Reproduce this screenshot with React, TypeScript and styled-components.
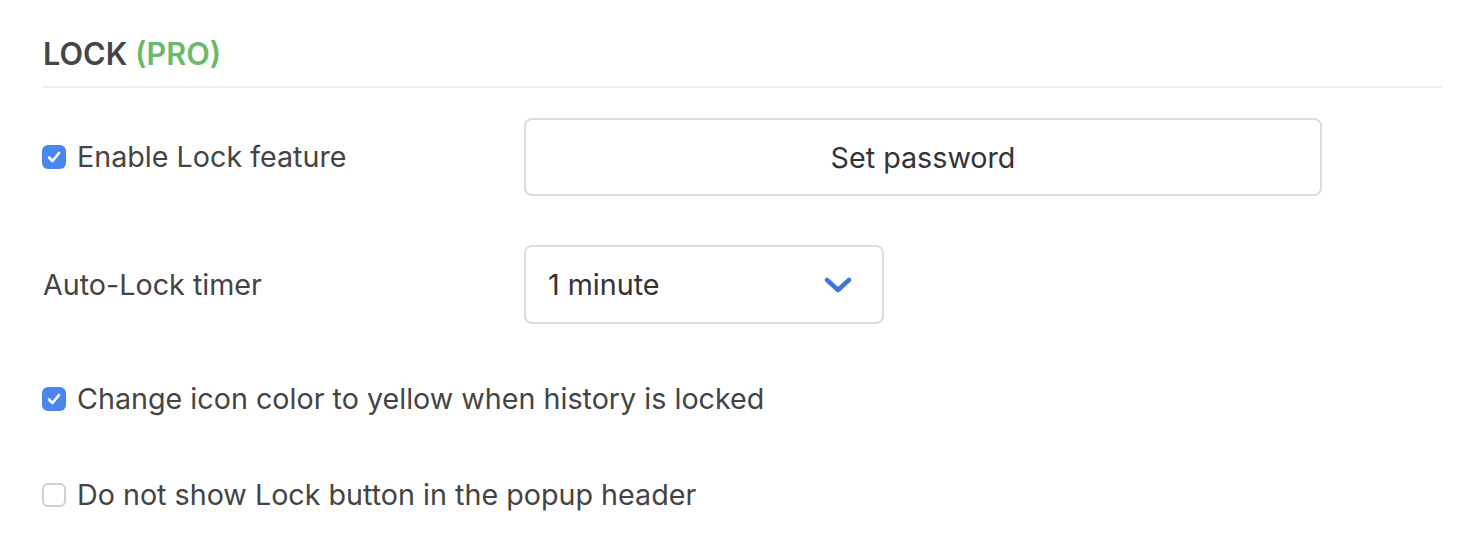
import React, { useState } from 'react'
import styled, { createGlobalStyle } from 'styled-components'

const GlobalStyle = createGlobalStyle`
    html, body {
        margin: 0;
        padding: 0;
        background: #fff;
        font-family: Inter, "Liberation Sans", Arial, sans-serif;
        color: #444;
    }
`

const Page = styled.div`
    padding: 0 41px 0 43px;
`

const Heading = styled.h2`
    margin: 0;
    padding: 36px 0 14px;
    font-size: 30.7px;
    line-height: 36px;
    font-weight: 600;
    color: #464646;
    border-bottom: 2px solid #ececec;
`

const Pro = styled.span`
    color: #6cb96a;
`

const Rows = styled.div`
    display: flex;
    flex-direction: column;
    padding-top: 30px;
`

const Row = styled.div<{ $height: number; $gap: number }>`
    display: flex;
    align-items: center;
    height: ${p => p.$height}px;
    margin-bottom: ${p => p.$gap}px;
`

const Label = styled.div`
    width: 481px;
    flex-shrink: 0;
    font-size: 28.7px;
    line-height: 34px;
`

const CheckLabel = styled.label`
    display: flex;
    align-items: center;
    gap: 11px;
    font-size: 28.7px;
    line-height: 34px;
    cursor: pointer;
    margin-left: -1px;
`

const Box = styled.span<{ $on: boolean }>`
    width: 24px;
    height: 24px;
    box-sizing: border-box;
    border-radius: 6px;
    display: flex;
    align-items: center;
    justify-content: center;
    background: ${p => (p.$on ? '#4a86f0' : '#fff')};
    border: ${p => (p.$on ? 'none' : '2px solid #cfcfcf')};
`

const Button = styled.button`
    width: 798px;
    height: 78px;
    box-sizing: border-box;
    border: 2px solid #dcdcdc;
    border-radius: 8px;
    background: #fff;
    font-family: inherit;
    font-size: 28.7px;
    color: #333;
    cursor: pointer;
`

const Select = styled.div`
    width: 360px;
    height: 79px;
    box-sizing: border-box;
    border: 2px solid #dcdcdc;
    border-radius: 8px;
    display: flex;
    align-items: center;
    justify-content: space-between;
    padding: 0 30px 0 22px;
    font-size: 28.7px;
    color: #333;
`

function Checkbox({ checked, onChange, children }: any) {
    return (
        <CheckLabel onClick={onChange}>
            <Box $on={checked}>
                {checked && (
                    <svg width="14" height="12" viewBox="0 0 14 12">
                        <path d="M2 6.5 L5.5 10 L12 2" fill="none" stroke="#fff" strokeWidth="2.6" strokeLinecap="round" strokeLinejoin="round" />
                    </svg>
                )}
            </Box>
            {children}
        </CheckLabel>
    )
}

export default function App() {
    const [lock, setLock] = useState(true)
    const [yellow, setYellow] = useState(true)
    const [hide, setHide] = useState(false)

    return (
        <Page>
            <GlobalStyle />
            <Heading>LOCK <Pro>(PRO)</Pro></Heading>
            <Rows>
                <Row $height={78} $gap={49}>
                    <Label>
                        <Checkbox checked={lock} onChange={() => setLock(!lock)}>Enable Lock feature</Checkbox>
                    </Label>
                    <Button>Set password</Button>
                </Row>
                <Row $height={79} $gap={58}>
                    <Label>Auto-Lock timer</Label>
                    <Select>
                        <span>1 minute</span>
                        <svg width="28" height="18" viewBox="0 0 28 18">
                            <path d="M3 4 L14 14 L25 4" fill="none" stroke="#3f76d8" strokeWidth="4.5" strokeLinecap="round" strokeLinejoin="round" />
                        </svg>
                    </Select>
                </Row>
                <Row $height={34} $gap={62}>
                    <Checkbox checked={yellow} onChange={() => setYellow(!yellow)}>Change icon color to yellow when history is locked</Checkbox>
                </Row>
                <Row $height={34} $gap={0}>
                    <Checkbox checked={hide} onChange={() => setHide(!hide)}>Do not show Lock button in the popup header</Checkbox>
                </Row>
            </Rows>
        </Page>
    )
}
